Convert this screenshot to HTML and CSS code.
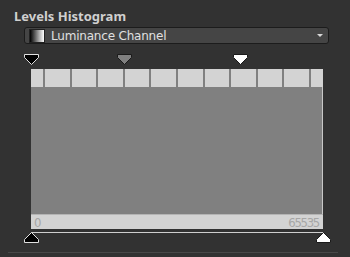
FILE: index.html
```html
<!DOCTYPE html>
<html lang="en">
<head>
  <meta charset="UTF-8" />
  <title>Levels Histogram</title>
  <link rel="stylesheet" href="styles.css">
</head>
<body>
  <div class="panel">
    <h1 class="title">Levels Histogram</h1>

    <div class="channel-select">
      <span class="swatch"></span>
      <span class="channel-name">Luminance Channel</span>
      <span class="caret"></span>
    </div>

    <div class="markers markers-top">
      <svg class="marker" style="left: 0%" width="15" height="11" viewBox="0 0 15 11">
        <polygon points="0.5,0.5 14.5,0.5 14.5,3.5 7.5,10.5 0.5,3.5" fill="#000" stroke="#e0e0e0"/>
      </svg>
      <svg class="marker" style="left: 31.8%" width="15" height="11" viewBox="0 0 15 11">
        <polygon points="0.5,0.5 14.5,0.5 14.5,3.5 7.5,10.5 0.5,3.5" fill="#808080" stroke="#1a1a1a"/>
      </svg>
      <svg class="marker" style="left: 71.6%" width="15" height="11" viewBox="0 0 15 11">
        <polygon points="0.5,0.5 14.5,0.5 14.5,3.5 7.5,10.5 0.5,3.5" fill="#fff" stroke="#1a1a1a"/>
      </svg>
    </div>

    <div class="histogram">
      <div class="grid-row">
        <span></span><span></span><span></span><span></span><span></span><span></span>
        <span></span><span></span><span></span><span></span><span></span>
      </div>
      <div class="plot"></div>
      <div class="axis">
        <span>0</span>
        <span>65535</span>
      </div>
    </div>

    <div class="track"></div>

    <div class="markers markers-bottom">
      <svg class="marker" style="left: 0%" width="15" height="11" viewBox="0 0 15 11">
        <polygon points="7.5,0.5 14.5,7.5 14.5,10.5 0.5,10.5 0.5,7.5" fill="#000" stroke="#e0e0e0"/>
      </svg>
      <svg class="marker" style="left: 100%" width="15" height="11" viewBox="0 0 15 11">
        <polygon points="7.5,0.5 14.5,7.5 14.5,10.5 0.5,10.5 0.5,7.5" fill="#fff" stroke="#1a1a1a"/>
      </svg>
    </div>

    <div class="divider"></div>
  </div>
</body>
</html>
```

FILE: styles.css
```css
body {
  margin: 0;
  background: #323232;
  font-family: "DejaVu Sans", sans-serif;
  color: #ddd;
}
.panel {
  padding: 8px 12px 0 8px;
  height: 257px;
  box-sizing: border-box;
}
.title {
  font-family: "Noto Sans", sans-serif;
  font-size: 13px;
  font-weight: bold;
  color: #d0d0d0;
  margin: 0 0 0 6px;
  line-height: 16px;
  height: 19px;
}
.channel-select {
  display: flex;
  align-items: center;
  margin-left: 16px;
  width: 305px;
  height: 17px;
  box-sizing: border-box;
  border: 1px solid #1c1c1c;
  border-radius: 3px;
  background: #454545;
}
.swatch {
  width: 14px;
  height: 12px;
  margin-left: 4px;
  border: 1px solid #222;
  background: linear-gradient(to right, #000 0%, #333 20%, #aaa 65%, #fff 100%);
}
.channel-name {
  margin-left: 6px;
  font-size: 12px;
  letter-spacing: -0.2px;
  color: #e0e0e0;
  flex: 1;
}
.caret {
  width: 0;
  height: 0;
  margin-right: 5px;
  border-left: 3px solid transparent;
  border-right: 3px solid transparent;
  border-top: 3px solid #d8d8d8;
}
.markers {
  position: relative;
  margin-left: 23px;
  width: 292px;
  height: 11px;
}
.marker {
  position: absolute;
  top: 0;
  margin-left: -7px;
  display: block;
}
.markers-top {
  margin-top: 10px;
}
.histogram {
  margin-left: 23px;
  margin-top: 4px;
  width: 292px;
}
.grid-row {
  display: grid;
  grid-template-columns: repeat(11, 1fr);
  height: 18px;
  background: #d3d3d3;
}
.grid-row span {
  display: flex;
  justify-content: center;
}
.grid-row span::after {
  content: "";
  width: 2px;
  background: #808080;
}
.plot {
  height: 127px;
  background: #808080;
  border-right: 1px solid #c8c8c8;
  box-sizing: border-box;
}
.axis {
  display: flex;
  justify-content: space-between;
  align-items: center;
  height: 14px;
  padding: 0 4px 0 3px;
  background: #d3d3d3;
  border-top: 1px solid #b4b4b4;
  font-family: "DejaVu Sans Condensed", sans-serif;
  font-size: 13px;
  letter-spacing: -1.3px;
  color: #a6a6a6;
}
.track {
  margin-left: 23px;
  margin-top: 3px;
  width: 292px;
  height: 1px;
  background: #cfcfcf;
}
.markers-bottom {
  margin-top: -1px;
}
.divider {
  margin-top: 9px;
  width: 330px;
  height: 1px;
  background: #484848;
}
```
